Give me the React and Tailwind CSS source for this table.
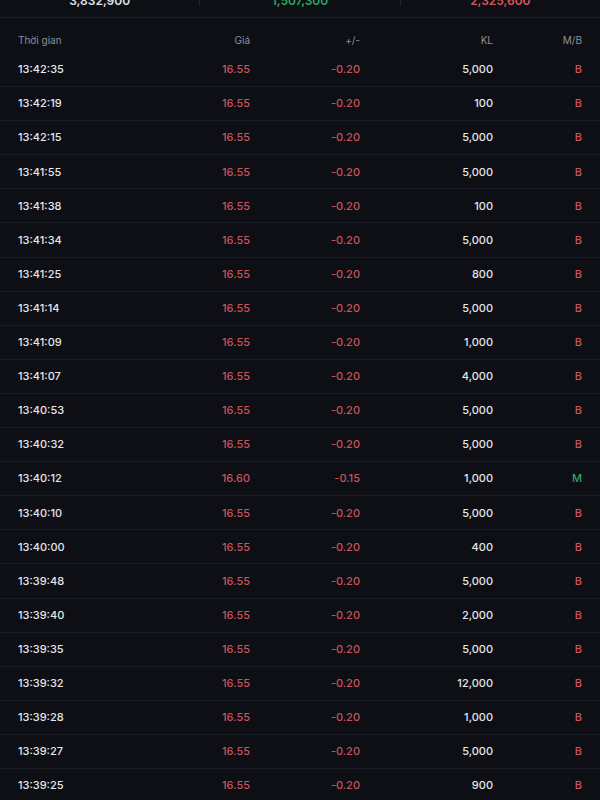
import React from 'react';

const rows = [
  ['13:42:35', '16.55', '-0.20', '5,000', 'B'],
  ['13:42:19', '16.55', '-0.20', '100', 'B'],
  ['13:42:15', '16.55', '-0.20', '5,000', 'B'],
  ['13:41:55', '16.55', '-0.20', '5,000', 'B'],
  ['13:41:38', '16.55', '-0.20', '100', 'B'],
  ['13:41:34', '16.55', '-0.20', '5,000', 'B'],
  ['13:41:25', '16.55', '-0.20', '800', 'B'],
  ['13:41:14', '16.55', '-0.20', '5,000', 'B'],
  ['13:41:09', '16.55', '-0.20', '1,000', 'B'],
  ['13:41:07', '16.55', '-0.20', '4,000', 'B'],
  ['13:40:53', '16.55', '-0.20', '5,000', 'B'],
  ['13:40:32', '16.55', '-0.20', '5,000', 'B'],
  ['13:40:12', '16.60', '-0.15', '1,000', 'M'],
  ['13:40:10', '16.55', '-0.20', '5,000', 'B'],
  ['13:40:00', '16.55', '-0.20', '400', 'B'],
  ['13:39:48', '16.55', '-0.20', '5,000', 'B'],
  ['13:39:40', '16.55', '-0.20', '2,000', 'B'],
  ['13:39:35', '16.55', '-0.20', '5,000', 'B'],
  ['13:39:32', '16.55', '-0.20', '12,000', 'B'],
  ['13:39:28', '16.55', '-0.20', '1,000', 'B'],
  ['13:39:27', '16.55', '-0.20', '5,000', 'B'],
  ['13:39:25', '16.55', '-0.20', '900', 'B'],
];

export default function App() {
  return (
    <div className="w-[600px] h-[800px] overflow-hidden bg-[#0d0f15] text-[#e6e7ea] font-['Inter','Liberation_Sans',sans-serif]">
      {/* summary strip, cut off at the top */}
      <div className="h-[24px] -mt-[6px] flex border-b border-[#1c1f27]">
        <div className="flex-1 flex justify-center items-start text-[12px] font-semibold leading-[14px] text-[#dfe0e3]">3,832,900</div>
        <div className="w-px h-[12px] bg-[#1f2229]" />
        <div className="flex-1 flex justify-center items-start text-[12px] font-semibold leading-[14px] text-[#2ea566]">1,507,300</div>
        <div className="w-px h-[12px] bg-[#1f2229]" />
        <div className="flex-1 flex justify-center items-start text-[12px] font-semibold leading-[14px] text-[#d9555b]">2,325,600</div>
      </div>

      <div className="h-[35px] flex items-start pt-[16px] px-[18px] text-[10px] leading-[12px] text-[#8d9099]">
        <div className="w-[150px]">Thời gian</div>
        <div className="w-[82px] text-right">Giá</div>
        <div className="w-[110px] text-right">+/-</div>
        <div className="w-[133px] text-right">KL</div>
        <div className="flex-1 text-right">M/B</div>
      </div>

      <div>
        {rows.map(([t, p, c, v, s]) => (
          <div key={t} className="h-[34.1px] flex items-center px-[18px] border-b border-[#1a1d25] text-[11px] font-medium">
            <div className="w-[150px] text-[#e6e7ea]">{t}</div>
            <div className="w-[82px] text-right text-[#cc525b]">{p}</div>
            <div className="w-[110px] text-right text-[#cc525b]">{c}</div>
            <div className="w-[133px] text-right text-[#e6e7ea]">{v}</div>
            <div className={'flex-1 text-right ' + (s === 'M' ? 'text-[#2ea566]' : 'text-[#cc525b]')}>{s}</div>
          </div>
        ))}
      </div>
    </div>
  );
}
